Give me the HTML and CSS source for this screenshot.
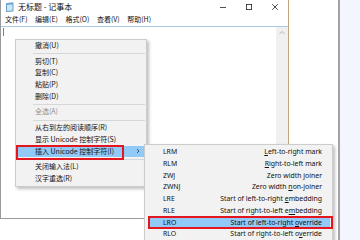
FILE: index.html
```html
<!DOCTYPE html>
<html>
<head>
    <title>无标题 - 记事本</title>
    <link rel="stylesheet" href="styles.css">
</head>
<body>
    <div class="screen">
        <div class="window">
            <div class="titlebar">
                <svg class="app-icon" width="9" height="10" viewBox="0 0 9 10">
                    <path d="M1.5 1.5 L8 0.8 L8 9 L1.5 9.5 Z" fill="#c9e9f8" stroke="#4a86b4" stroke-width="0.8"/>
                    <path d="M1.5 1.5 L8 0.8 L8 2.4 L1.5 3 Z" fill="#6fa9d4"/>
                </svg>
                <span class="title">无标题 - 记事本</span>
                <div class="controls">
                    <span class="ctl">
                        <svg width="8" height="8" viewBox="0 0 8 8"><path d="M1 4.5 H7" stroke="#222" stroke-width="0.8"/></svg>
                    </span>
                    <span class="ctl">
                        <svg width="8" height="8" viewBox="0 0 8 8"><rect x="1.4" y="1.4" width="5.2" height="5.2" fill="none" stroke="#222" stroke-width="0.8"/></svg>
                    </span>
                    <span class="ctl">
                        <svg width="8" height="8" viewBox="0 0 8 8"><path d="M1.2 1.2 L6.8 6.8 M6.8 1.2 L1.2 6.8" stroke="#222" stroke-width="0.8"/></svg>
                    </span>
                </div>
            </div>
            <div class="menubar">
                <span>文件(F)</span>
                <span>编辑(E)</span>
                <span>格式(O)</span>
                <span>查看(V)</span>
                <span>帮助(H)</span>
            </div>
            <div class="editor">
                <div class="text"><span class="caret"></span></div>
                <div class="scrollbar">
                    <svg width="8" height="6" viewBox="0 0 8 6"><path d="M1.5 4 L4 1.5 L6.5 4" fill="none" stroke="#a0a0a0" stroke-width="0.8"/></svg>
                </div>
            </div>
        </div>
        <div class="gap"></div>
        <div class="panel"></div>
    </div>

    <!-- context menu -->
    <div class="menu main-menu">
        <div class="item">撤消(U)</div>
        <div class="sep"></div>
        <div class="item">剪切(T)</div>
        <div class="item">复制(C)</div>
        <div class="item">粘贴(P)</div>
        <div class="item">删除(D)</div>
        <div class="sep"></div>
        <div class="item disabled">全选(A)</div>
        <div class="sep"></div>
        <div class="item">从右到左的阅读顺序(R)</div>
        <div class="item">显示 Unicode 控制字符(S)</div>
        <div class="item active">插入 Unicode 控制字符(I)
            <svg class="arrow" width="4" height="6" viewBox="0 0 4 6"><path d="M1 1 L3 3 L1 5" fill="none" stroke="#333" stroke-width="0.8"/></svg>
        </div>
        <div class="sep"></div>
        <div class="item">关闭输入法(L)</div>
        <div class="item">汉字重选(R)</div>
    </div>

    <div class="menu sub-menu">
        <div class="sub-item"><span>LRM</span><span><u>L</u>eft-to-right mark</span></div>
        <div class="sub-item"><span>RLM</span><span><u>R</u>ight-to-left mark</span></div>
        <div class="sub-item"><span>ZWJ</span><span>Zero width <u>j</u>oiner</span></div>
        <div class="sub-item"><span>ZWNJ</span><span>Zero width <u>n</u>on-joiner</span></div>
        <div class="sub-item"><span>LRE</span><span>Start of left-to-right <u>e</u>mbedding</span></div>
        <div class="sub-item"><span>RLE</span><span>Start of right-to-left e<u>m</u>bedding</span></div>
        <div class="sub-item active"><span>LRO</span><span>Start of left-to-right <u>o</u>verride</span></div>
        <div class="sub-item"><span>RLO</span><span>Start of right-to-left o<u>v</u>erride</span></div>
    </div>

    <div class="mark mark-main"></div>
    <div class="mark mark-sub"></div>
</body>
</html>
```

FILE: styles.css
```css
body {
    margin: 0;
    width: 360px;
    height: 240px;
    overflow: hidden;
    position: relative;
    background: #fff;
    font-family: "Noto Sans CJK SC", sans-serif;
    color: #111;
}

.screen {
    display: flex;
    height: 240px;
}

.window {
    width: 289px;
    height: 219px;
    box-sizing: border-box;
    border-left: 1px solid #9a9a9a;
    border-right: 1px solid #c9a27e;
    border-bottom: 1px solid #9a9a9a;
    display: flex;
    flex-direction: column;
}

.titlebar {
    height: 13px;
    display: flex;
    align-items: center;
}

.app-icon {
    margin-left: 4px;
    margin-right: 4px;
}

.title {
    font-size: 8px;
    line-height: 13px;
}

.controls {
    margin-left: auto;
    display: flex;
}

.ctl {
    width: 26px;
    height: 13px;
    display: flex;
    align-items: center;
    justify-content: center;
}

.menubar {
    height: 13px;
    display: flex;
    gap: 7.5px;
    padding-left: 4px;
    font-size: 7px;
    line-height: 13px;
}

.editor {
    flex: 1;
    display: flex;
    border-top: 1px solid #a9cbe6;
}

.text {
    flex: 1;
    padding: 1px 0 0 2px;
}

.caret {
    display: block;
    width: 1px;
    height: 8px;
    background: #b07040;
}

.scrollbar {
    width: 12px;
    background: #f0f0f0;
    display: flex;
    justify-content: center;
    align-items: flex-start;
    padding-top: 3px;
}

.gap {
    flex: 1;
}

.panel {
    width: 20px;
    border-left: 2px solid #a3a3a3;
    background: #f3f7fd;
}

.menu {
    position: absolute;
    box-sizing: border-box;
    background: #f2f2f2;
    border: 1px solid #cccccc;
    box-shadow: 2px 2px 3px rgba(0, 0, 0, 0.25);
    font-size: 7px;
}

.main-menu {
    left: 15px;
    top: 39px;
    width: 132px;
    padding-bottom: 1px;
}

.item {
    height: 11.7px;
    line-height: 11.7px;
    margin: 0 1px;
    padding-left: 18px;
    display: flex;
    align-items: center;
    white-space: nowrap;
}

.item.disabled {
    color: #8d8d8d;
}

.item.active,
.sub-item.active {
    background: #91c9f7;
}

.arrow {
    margin-left: auto;
    margin-right: 5px;
}

.sep {
    height: 1px;
    margin: 1.5px 1px 1.5px 17px;
    background: #d7d7d7;
}

.sub-menu {
    left: 144px;
    top: 144px;
    width: 189px;
    padding-top: 1px;
    font-family: "Noto Sans", sans-serif;
    font-size: 6.9px;
}

.sub-item {
    height: 11.75px;
    line-height: 11.75px;
    margin: 0 2px 0 4px;
    padding: 0 8px 0 14px;
    display: flex;
    justify-content: space-between;
    white-space: nowrap;
}

.mark {
    position: absolute;
    box-sizing: border-box;
    border: 2px solid #e3151f;
}

.mark-main {
    left: 16px;
    top: 145px;
    width: 108px;
    height: 15px;
}

.mark-sub {
    left: 148px;
    top: 216px;
    width: 185px;
    height: 13px;
}
```
